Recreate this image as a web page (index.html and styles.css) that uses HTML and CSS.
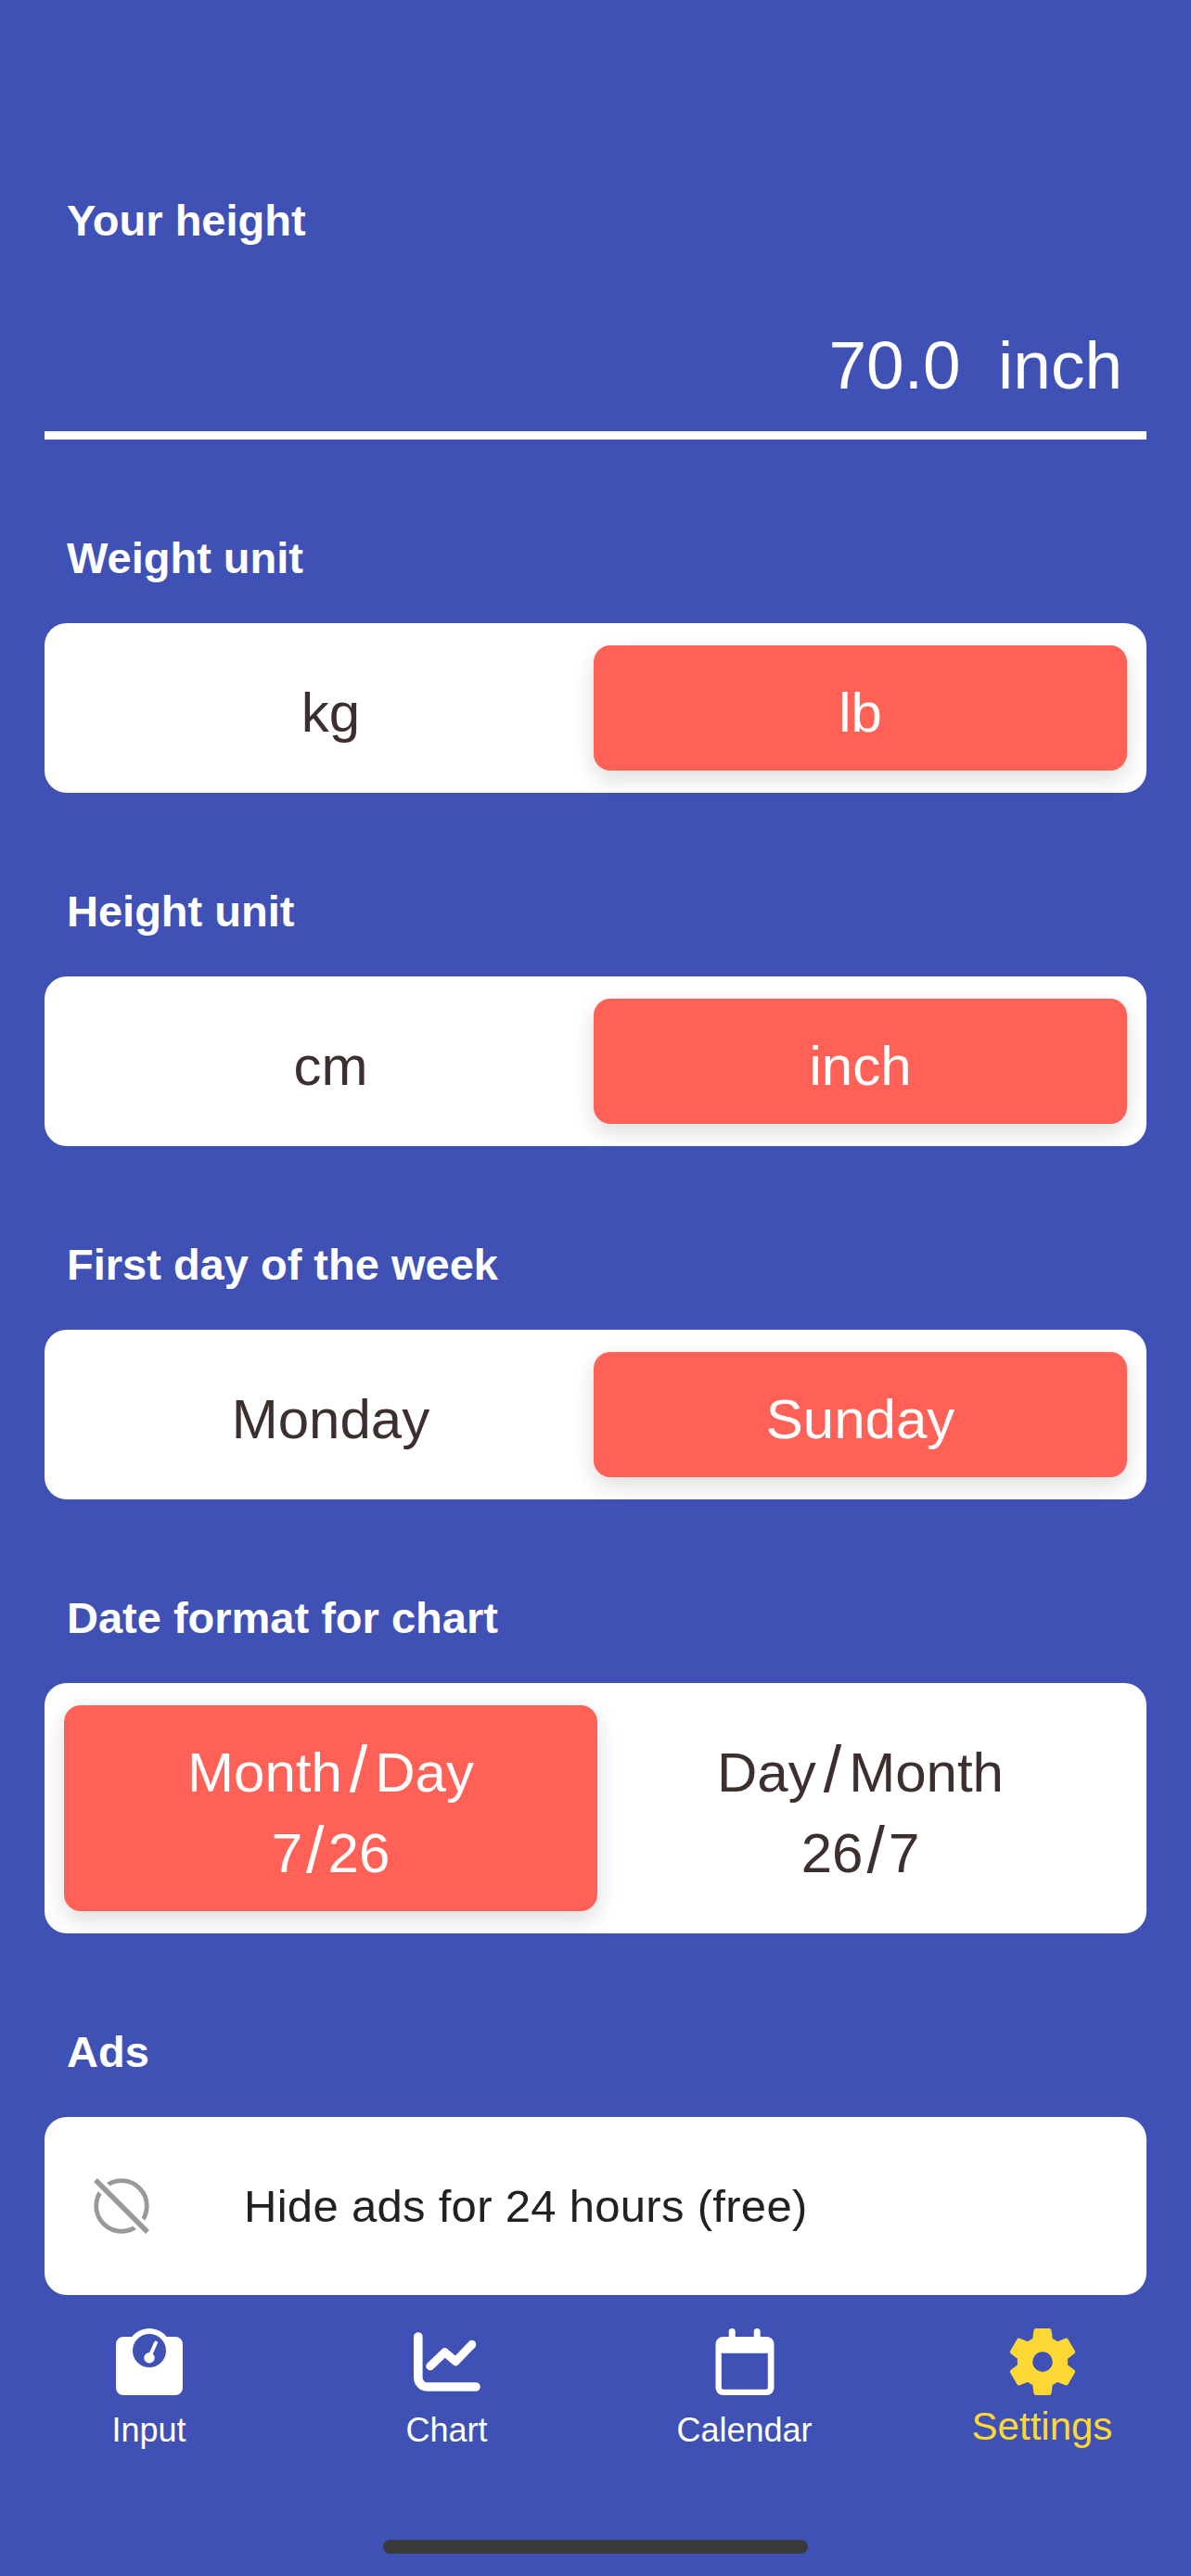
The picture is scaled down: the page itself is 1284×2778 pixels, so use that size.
FILE: index.html
```html
<!DOCTYPE html>
<html lang="en">
<head>
    <meta charset="UTF-8">
    <meta name="viewport" content="width=device-width, initial-scale=1.0">
    <title>Settings</title>
    <link rel="stylesheet" href="styles.css">
</head>
<body>
    <div class="screen">
        <main class="settings">
            <section class="setting setting-height">
                <h2 class="setting-label">Your height</h2>
                <div class="height-value">70.0  inch</div>
            </section>

            <section class="setting">
                <h2 class="setting-label">Weight unit</h2>
                <div class="segment">
                    <div class="segment-option">kg</div>
                    <div class="segment-option active">lb</div>
                </div>
            </section>

            <section class="setting">
                <h2 class="setting-label">Height unit</h2>
                <div class="segment">
                    <div class="segment-option">cm</div>
                    <div class="segment-option active">inch</div>
                </div>
            </section>

            <section class="setting">
                <h2 class="setting-label">First day of the week</h2>
                <div class="segment">
                    <div class="segment-option">Monday</div>
                    <div class="segment-option active">Sunday</div>
                </div>
            </section>

            <section class="setting">
                <h2 class="setting-label">Date format for chart</h2>
                <div class="segment segment-tall">
                    <div class="segment-option active">
                        <span>Month<span class="slash wide">/</span>Day</span>
                        <span>7<span class="slash">/</span>26</span>
                    </div>
                    <div class="segment-option">
                        <span>Day<span class="slash wide">/</span>Month</span>
                        <span>26<span class="slash">/</span>7</span>
                    </div>
                </div>
            </section>

            <section class="setting">
                <h2 class="setting-label">Ads</h2>
                <div class="ads-row">
                    <svg class="ads-icon" viewBox="0 0 60 60">
                        <circle cx="30" cy="30" r="27.3" fill="none" stroke="#999" stroke-width="4.8"/>
                        <path d="M3 3 57 57" stroke="#fff" stroke-width="13"/>
                        <path d="M2 2 58 58" stroke="#999" stroke-width="5.4"/>
                    </svg>
                    <span class="ads-text">Hide ads for 24 hours (free)</span>
                </div>
            </section>
        </main>

        <nav class="tabs">
            <div class="tab">
                <svg class="tab-icon" viewBox="0 0 72 72">
                    <path fill="#fff" fill-rule="evenodd" d="M17.3 9C21.7 3.5 28.5 0 36 0s14.300 3.500 18.700 9H64a8 8 0 0 1 8 8v47a8 8 0 0 1-8 8H8a8 8 0 0 1-8-8V17a8 8 0 0 1 8-8zM36 6a18 18 0 1 0 0 36 18 18 0 0 0 0-36z"/>
                    <path stroke="#fff" stroke-width="4" stroke-linecap="round" d="M36 31 43 15.500"/>
                    <circle cx="36" cy="31.700" r="5.700" fill="#fff"/>
                </svg>
                <span class="tab-label">Input</span>
            </div>
            <div class="tab">
                <svg class="tab-icon" viewBox="0 0 72 72">
                    <g fill="none" stroke="#fff" stroke-linecap="round" stroke-linejoin="round">
                        <path stroke-width="9.600" d="M4.800 9V53a10 10 0 0 0 10 10H67"/>
                        <path stroke-width="9" d="M17.800 40.700 33.500 25.700 45.200 35.700 62.800 17.300"/>
                    </g>
                </svg>
                <span class="tab-label">Chart</span>
            </div>
            <div class="tab">
                <svg class="tab-icon" viewBox="0 0 72 72">
                    <path fill="#fff" fill-rule="evenodd" d="M18.700 9V3.500a3.500 3.500 0 0 1 7 0V9H45.700V3.500a3.500 3.500 0 0 1 7 0V9H59.500a8 8 0 0 1 8 8V64a8 8 0 0 1-8 8H12.500a8 8 0 0 1-8-8V17a8 8 0 0 1 8-8zM10.800 26.700V63.700a2 2 0 0 0 2 2H58.800a2 2 0 0 0 2-2V26.700z"/>
                </svg>
                <span class="tab-label">Calendar</span>
            </div>
            <div class="tab active">
                <svg class="tab-icon" viewBox="1.800 1.800 20.400 20.400">
                    <path fill="#fdd835" stroke="#fdd835" stroke-width="0.4" stroke-linejoin="round" fill-rule="evenodd" d="M19.430 12.980c.04-.32.07-.64.07-.98s-.03-.66-.07-.98l2.110-1.650c.19-.15.24-.42.12-.64l-2-3.460c-.12-.22-.39-.3-.61-.22l-2.490 1c-.52-.4-1.080-.73-1.690-.98l-.38-2.650C14.460 2.180 14.250 2 14 2h-4c-.25 0-.46.18-.49.42l-.38 2.650c-.61.25-1.170.59-1.690.98l-2.490-1c-.23-.09-.49 0-.61.22l-2 3.460c-.13.22-.07.49.12.64l2.110 1.650c-.04.32-.07.65-.07.98s.03.66.07.98l-2.110 1.650c-.19.15-.24.42-.12.64l2 3.460c.12.22.39.3.61.22l2.490-1c.52.4 1.080.73 1.690.98l.38 2.650c.03.24.24.42.49.42h4c.25 0 .46-.18.49-.42l.38-2.650c.61-.25 1.170-.59 1.690-.98l2.490 1c.23.09.49 0 .61-.22l2-3.460c.12-.22.07-.49-.12-.64l-2.110-1.650zM12 15.250a3.250 3.250 0 1 1 0-6.500 3.250 3.250 0 0 1 0 6.500z"/>
                </svg>
                <span class="tab-label">Settings</span>
            </div>
        </nav>

        <div class="home-bar"></div>
    </div>
</body>
</html>
```

FILE: styles.css
```css
* {
    box-sizing: border-box;
}
body {
    margin: 0;
    font-family: "Liberation Sans", Arial, sans-serif;
    background-color: #3f51b5;
}
.screen {
    height: 2778px;
    display: flex;
    flex-direction: column;
    overflow: hidden;
    background-color: #3f51b5;
}
.settings {
    padding: 210px 48px 0;
}
.setting {
    margin-bottom: 100px;
}
.setting:last-child {
    margin-bottom: 0;
}
.setting-height {
    margin-bottom: 100px;
}
.setting-label {
    margin: 0 0 42px;
    padding-left: 24px;
    font-size: 47px;
    line-height: 56px;
    font-weight: bold;
    color: #fff;
}
.height-value {
    margin-top: 83px;
    padding-right: 26px;
    padding-bottom: 26px;
    border-bottom: 9px solid #fff;
    font-size: 73px;
    line-height: 90px;
    color: #fff;
    text-align: right;
    white-space: pre;
}
.segment {
    display: grid;
    grid-template-columns: 1fr 1fr;
    height: 183px;
    padding: 24px 21px;
    border-radius: 24px;
    background-color: #fff;
}
.segment-tall {
    height: 270px;
}
.segment-option {
    display: flex;
    flex-direction: column;
    justify-content: center;
    align-items: center;
    padding-top: 9px;
    border-radius: 18px;
    font-size: 60px;
    line-height: 87px;
    color: #3e2f2f;
}
.segment-option:first-child {
    margin-right: -2px;
}
.segment-option:last-child {
    margin-left: -2px;
}
.segment-option.active {
    background-color: #ff6157;
    color: #fff;
    box-shadow: 0 9px 24px rgba(0,0,0,0.14);
}
.slash {
    margin: 0 4px;
    font-size: 70px;
    line-height: 1px;
}
.slash.wide {
    margin: 0 8px;
}
.ads-row {
    display: flex;
    align-items: center;
    height: 192px;
    padding-left: 53px;
    border-radius: 24px;
    background-color: #fff;
}
.ads-icon {
    width: 60px;
    height: 60px;
}
.ads-text {
    margin-left: 102px;
    font-size: 49px;
    letter-spacing: 0.3px;
    color: #212121;
}
.tabs {
    display: grid;
    grid-template-columns: repeat(4, 1fr);
    padding-top: 36px;
}
.tab {
    display: flex;
    flex-direction: column;
    align-items: center;
    color: #fff;
}
.tab.active {
    color: #fdd835;
}
.tab-icon {
    width: 72px;
    height: 72px;
}
.tab-label {
    margin-top: 13px;
    font-size: 36px;
    line-height: 50px;
}
.tab.active .tab-label {
    margin-top: 9px;
    font-size: 42px;
}
.home-bar {
    width: 458px;
    height: 15px;
    margin: auto auto 24px;
    border-radius: 8px;
    background-color: #3a3a3a;
}
```
